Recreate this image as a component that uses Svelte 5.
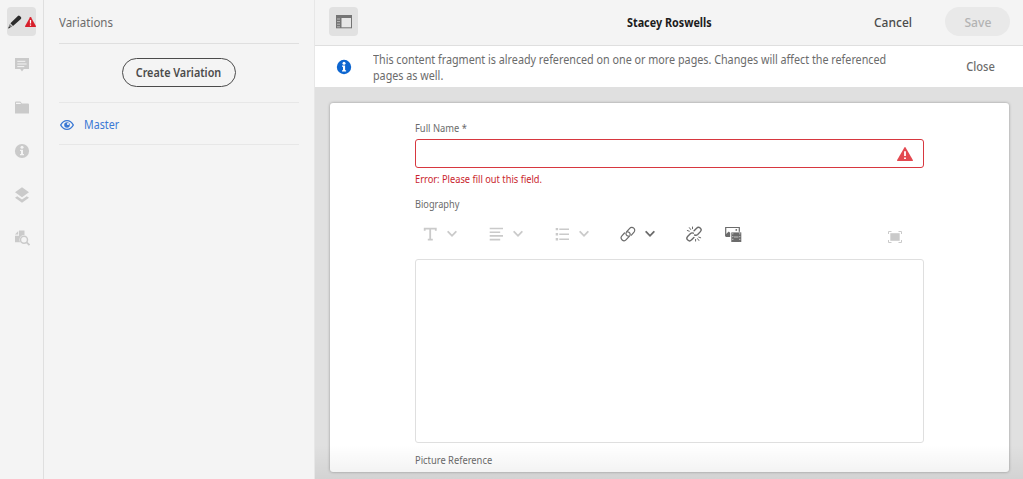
<script>
  const tools = ['text', 'align', 'list'];
</script>

<div class="app">
  <nav class="rail">
    <button class="tab active" aria-label="Edit">
      <svg class="pencil" width="14" height="14" viewBox="0 0 14 14"><path d="M9.9.9Q10.8 0 11.8 1l1.1 1.1q.9.9 0 1.8L5 11 2.4 8.3z" fill="#2c2c2c"/><path d="M1.7 8.9 4.3 11.6.3 13.5z" fill="#777"/><path d="m.3 13.5.6-2 1.4 1.3z" fill="#2c2c2c"/></svg>
      <svg class="warn" width="11" height="10" viewBox="0 0 11 10"><path d="M5 .3a.6.6 0 0 1 1 0L11 9.2q0 .8-.6.8H.6Q0 10 0 9.2z" fill="#d7202c"/><path d="M4.9 3.1h1.2v3.5H4.9zM4.9 7.5h1.2v1.2H4.9z" fill="#fff"/></svg>
    </button>
    <button class="tab" aria-label="Comments"><svg width="16" height="16" viewBox="0 0 16 16"><path d="M1 1h14v11H9.8L8 14.6 6.2 12H1z" fill="#cacaca"/><path d="M3.3 4.3h8M3.3 7h9.3M3.3 9.6h7" stroke="#f4f4f4"/></svg></button>
    <button class="tab" aria-label="Assets"><svg width="16" height="16" viewBox="0 0 16 16"><path d="M1 4V2.5q0-1 1-1h4.3l1.7 2h6q1 0 1 1v9H1z" fill="#cacaca"/><path d="M2 4V2.7h4L7.3 4z" fill="#f4f4f4"/></svg></button>
    <button class="tab" aria-label="Information"><svg width="16" height="16" viewBox="0 0 16 16"><circle cx="8" cy="8" r="7.1" fill="#cacaca"/><circle cx="8" cy="4.3" r="1.5" fill="#f4f4f4"/><path d="M6 6.7h3v4.4h1v1.2H6v-1.2h1V8H6z" fill="#f4f4f4"/></svg></button>
    <button class="tab" aria-label="Structure"><svg width="16" height="16" viewBox="0 0 16 16"><path d="m8 .2 7 5-7 5-7-5z" fill="#cacaca"/><path d="m1 10.8 2.2-1.6L8 12.5l4.8-3.3 2.2 1.6-7 4.9z" fill="#cacaca"/></svg></button>
    <button class="tab" aria-label="Preview"><svg width="16" height="16" viewBox="0 0 16 16"><path d="M5 .5h5.5V6H5zM1 5.8h9v6.4H1z" fill="#cacaca"/><path d="M1 4.6 4.2 1v3.6z" fill="#cacaca"/><circle cx="10" cy="9.7" r="4.6" fill="#f4f4f4"/><circle cx="10" cy="9.7" r="3.5" fill="#f4f4f4" stroke="#cacaca" stroke-width="1.5"/><path d="m12.6 12.3 2.9 2.8" stroke="#cacaca" stroke-width="1.8"/></svg></button>
  </nav>

  <aside class="panel">
    <h2><span class="t-variations">Variations</span></h2>
    <div class="create"><button><span class="t-create">Create Variation</span></button></div>
    <div class="master">
      <svg width="14" height="12" viewBox="0 0 14 12"><path d="M.7 6Q3 1.6 7 1.6T13.3 6Q11 10.4 7 10.4T.7 6z" fill="none" stroke="#3a78d4" stroke-width="1.4"/><circle cx="7" cy="6" r="2.8" fill="#3a78d4"/><circle cx="8" cy="5" r="1.1" fill="#f4f4f4"/></svg>
      <span class="t-master">Master</span>
    </div>
  </aside>

  <main>
    <header>
      <button class="toggle" aria-label="Toggle panel"><svg width="16" height="14" viewBox="0 0 16 14"><path d="M0 0h16v13.3H0z" fill="#747474"/><path d="M5.5 3H15v9.3H5.5z" fill="#e6e6e6"/><path d="M1 4h3M1 6.6h3M1 9.2h3M1 11.8h3" stroke="#ccc" stroke-width=".8"/></svg></button>
      <h1><span class="t-title">Stacey Roswells</span></h1>
      <button class="cancel"><span class="t-cancel">Cancel</span></button>
      <button class="save"><span class="t-save">Save</span></button>
    </header>

    <section class="alert">
      <svg width="16" height="16" viewBox="0 0 16 16"><circle cx="8" cy="8" r="7.2" fill="#0d66d0"/><circle cx="8" cy="4.2" r="1.5" fill="#fff"/><path d="M6 6.5h3.1v4.7h1v1.2H6v-1.2h1V7.7H6z" fill="#fff"/></svg>
      <p><span class="t-alert">This content fragment is already referenced on one or more pages. Changes will affect the referenced<br />pages as well.</span></p>
      <button><span class="t-close">Close</span></button>
    </section>

    <div class="stage">
      <form class="card">
        <label for="name"><span class="t-full">Full Name *</span></label>
        <div class="field">
          <input id="name" />
          <svg width="16" height="14" viewBox="0 0 16 14"><path d="M7.4.4a.7.7 0 0 1 1.2 0L16 13.3q0 .7-.6.7H.6Q0 14 0 13.3z" fill="#e34850"/><path d="M7.1 4.2h1.8v4.7H7.1zM7.1 10.4h1.8V12H7.1z" fill="#fff"/></svg>
        </div>
        <div class="error"><span class="t-error">Error: Please fill out this field.</span></div>
        <div class="bio"><span class="t-bio">Biography</span></div>
        <div class="toolbar">
          {#each tools as name}
            <div class="tool muted">
              <svg width="16" height="16" viewBox="0 0 16 16">
                {#if name === 'text'}
                  <path d="M2.7 4.8V2.7h11.1v2.1M8.2 2.7v10.8M5.8 13.6h5" fill="none" stroke="currentColor" stroke-width="1.8"/>
                {:else if name === 'align'}
                  <path d="M1.7 2.5H15M1.7 6.2h10.5M1.7 9.9H15M1.7 13.6h10.5" fill="none" stroke="currentColor" stroke-width="1.6"/>
                {:else}
                  <path d="M5.3 3.2H15M5.3 8.2H15M5.3 13.2H15" stroke="currentColor" stroke-width="1.6"/><path d="M1.7 1.9h2.4v2.4H1.7zM1.7 7h2.4v2.4H1.7zM1.7 12h2.4v2.4H1.7z" fill="currentColor"/>
                {/if}
              </svg>
              <svg class="chev" width="10" height="8" viewBox="0 0 10 8"><path d="m1.2 1.8 3.8 4 3.8-4" fill="none" stroke="currentColor" stroke-width="1.8" stroke-linecap="round"/></svg>
            </div>
          {/each}
          <div class="tool">
            <svg width="16" height="16" viewBox="0 0 16 16"><g fill="none" stroke="currentColor" stroke-width="1.2" stroke-linecap="round"><path d="M8.5 10.2a2.6 2.6 0 0 1-2-4.2L9.7 2.4a2.8 2.8 0 0 1 4.3 3.8l-2.6 2.9"/><path d="M7.6 5.8a2.6 2.6 0 0 1 1.9 4.3l-3.3 3.6a2.8 2.8 0 0 1-4.3-3.8l2.6-2.9"/></g></svg>
            <svg class="chev" width="10" height="8" viewBox="0 0 10 8"><path d="m1.2 1.8 3.8 4 3.8-4" fill="none" stroke="currentColor" stroke-width="1.8" stroke-linecap="round"/></svg>
          </div>
          <svg class="unlink" width="16" height="16" viewBox="0 0 16 16"><g fill="none" stroke="currentColor" stroke-width="1.4" stroke-linecap="round"><path d="M8.1 4.8 10.6 2.2a2.5 2.5 0 0 1 3.8 3.4l-2.7 2.9Q10.2 9.8 8.6 9M7.9 11.4l-2.5 2.5a2.5 2.5 0 0 1-3.8-3.4l2.7-2.8q1.4-1.3 3-.5"/><path d="m1.3 4.5 2 .7M3.4 1.7l1.3 1.8M6.5 1v1.7M12.7 11.1l2 .7M11.6 12.7l1.3 1.8M9.6 13.4v1.7" stroke-width="1"/></g></svg>
          <svg class="media" width="17" height="16" viewBox="0 0 17 16"><path d="M.7 10V1.5h13.6V6" fill="none" stroke="currentColor" stroke-width="1.2"/><path d="M.5 11V8.5l3.3-3L5.3 7v4z" fill="currentColor"/><circle cx="11.3" cy="3.9" r=".9" fill="currentColor"/><path d="M5.5 5.8h11V16h-11z" fill="#fff"/><path d="M6.3 6.4h10V16h-10z" fill="currentColor"/><path d="M9 11h4.5" stroke="#ccc" stroke-width=".9"/><path d="M7.8 7.2v8.5M14.8 7.2v8.5" stroke="#ddd" stroke-width=".9" stroke-dasharray="1.2 1.6"/></svg>
          <svg class="full" width="14" height="12" viewBox="0 0 14 12"><path d="M2.3 2.2h9.4v7.6H2.3z" fill="#cacaca"/><path d="M.5 3V.5h3M10.5.5h3V3M.5 9v2.5h3M10.5 11.5h3V9" fill="none" stroke="#cacaca"/></svg>
        </div>
        <textarea aria-label="Biography"></textarea>
        <div class="picture"><span class="t-pic">Picture Reference</span></div>
      </form>
      <div class="fade"></div>
    </div>
  </main>
</div>

<style>
  :global(body) { margin: 0; overflow: hidden; }
  * { box-sizing: border-box; }
  .app { display: flex; width: 1023px; height: 479px; overflow: hidden; background: #f4f4f4; font-family: "Noto Sans", "Open Sans", sans-serif; font-size: 12px; color: #6b6b6b; }
  button { border: 0; padding: 0; background: none; font: inherit; color: inherit; }
  span { display: inline-block; white-space: nowrap; transform-origin: 0 50%; }
  svg { display: block; flex: none; }
  h1, h2, p { margin: 0; font-weight: 400; font-size: 12px; }

  .t-variations { font-size: 12.5px; transform: scaleX(.92); }
  .t-create { transform: scaleX(.9); transform-origin: 50% 50%; }
  .t-master { transform: scaleX(.89); }
  .t-title { transform: scaleX(.9); }
  .t-cancel { font-size: 12.5px; transform: scaleX(.96); }
  .t-save { font-size: 12.5px; transform: scaleX(.97); transform-origin: 50% 50%; }
  .t-alert { transform: scaleX(.897); }
  .t-close { transform: scaleX(.93); transform-origin: 100% 50%; }
  .t-full { transform: scaleX(.935); }
  .t-error { transform: scaleX(.927); }
  .t-bio { transform: scaleX(.92); }
  .t-pic { transform: scaleX(.935); }

  .rail { flex: none; width: 44px; border-right: 1px solid #dfdfdf; padding: 7px 0 0 7px; display: flex; flex-direction: column; gap: 14.3px; }
  .tab { width: 29px; height: 29px; border-radius: 4px; display: flex; align-items: center; justify-content: center; padding-left: 1px; }
  .active { background: #e1e1e1; justify-content: flex-start; gap: 3px; }

  .panel { flex: none; width: 271px; border-right: 1px solid #e7e7e7; padding: 0 15px; }
  h2 { height: 44px; line-height: 45px; border-bottom: 1px solid #dfdfdf; }
  .create { height: 59px; display: flex; align-items: center; justify-content: center; border-bottom: 1px solid #e7e7e7; padding: 0 1px 1px 0; }
  .create button { width: 114px; height: 29px; border: 1px solid #4b4b4b; border-radius: 15px; color: #4b4b4b; font-weight: 600; }
  .master { height: 42px; display: flex; align-items: center; gap: 10px; padding: 2px 0 0 1px; border-bottom: 1px solid #e7e7e7; color: #3a78d4; }

  main { flex: 1; min-width: 0; display: flex; flex-direction: column; }
  header { height: 46px; flex: none; border-bottom: 1px solid #dfdfdf; padding: 0 13px 2px 14px; display: flex; align-items: center; }
  .toggle { width: 29px; height: 29px; border-radius: 4px; background: #e1e1e1; display: flex; align-items: center; justify-content: center; }
  h1 { flex: 1; padding: 2px 0 0 269px; font-weight: 700; color: #1c1c1c; }
  .cancel { width: 71px; padding-top: 1px; text-align: left; color: #4b4b4b; font-weight: 500; }
  .save { width: 65px; height: 29px; padding-top: 1px; border-radius: 15px; background: #e9e9e9; color: #b3b3b3; font-weight: 500; }

  .alert { height: 41px; flex: none; background: #fff; display: flex; align-items: center; padding: 0 28px 0 21px; }
  .alert p { flex: 1; min-width: 0; padding-left: 21px; line-height: 16px; padding-top: 3px; }
  .alert button { font-weight: 500; }

  .stage { flex: 1; position: relative; background: #e0e0e0; padding: 16px 14px 7px 15px; }
  .card { height: 369px; background: #fff; border-radius: 3px; box-shadow: 0 0 3px rgba(0,0,0,.35); padding: 17px 85px 0; font-size: 10px; }
  label { display: block; height: 19px; line-height: 16px; }
  .field { height: 29px; width: 509px; border: 1px solid #d7373f; border-radius: 3px; display: flex; align-items: center; padding-right: 10px; }
  .field input { flex: 1; border: 0; outline: 0; background: none; }
  .error { height: 24px; line-height: 22px; color: #c9252d; }
  .bio { height: 26px; line-height: 25px; }
  .toolbar { height: 41px; display: flex; padding: 8px 22px 0 7px; color: #6b6b6b; }
  .tool { width: 66px; height: 16px; display: flex; align-items: center; gap: 9px; }
  .muted { color: #cacaca; }
  .media { margin-left: 23px; }
  .full { margin: 5px 0 0 auto; }
  textarea { display: block; width: 509px; height: 184px; border: 1px solid #dfdfdf; border-radius: 3px; resize: none; outline: 0; }
  .picture { line-height: 34px; }
  .fade { position: absolute; left: 0; right: 0; bottom: 0; height: 34px; background: linear-gradient(transparent, rgba(0,0,0,.06)); pointer-events: none; }
</style>
